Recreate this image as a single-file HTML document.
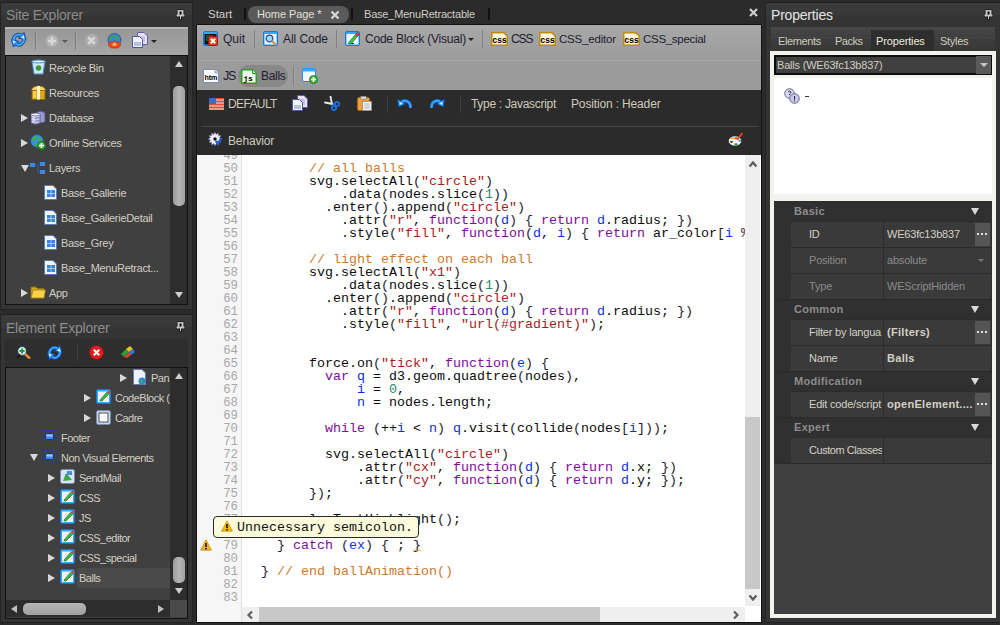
<!DOCTYPE html>
<html><head><meta charset="utf-8">
<style>
*{box-sizing:border-box;}
html,body{margin:0;padding:0;}
body{width:1000px;height:625px;background:#2b2b2b;position:relative;overflow:hidden;font-family:"Liberation Sans",sans-serif;font-size:11px;color:#d6d2c8;}
.a{position:absolute;}
.panel{position:absolute;border:1px solid #232323;background:linear-gradient(#3b3b3b,#393939 11px,#343434 14px,#343434);}
.ptitle{position:absolute;font-size:14px;line-height:16px;color:#8c8c8c;white-space:nowrap;letter-spacing:-0.25px;}
.pin{position:absolute;width:9px;height:10px;}
.tb-light{position:absolute;background:linear-gradient(#b6b6b6,#b6b6b6 1.5px,#979797 2px,#a7a7a7 100%);}
.tree{position:absolute;background:#404040;border:1px solid #111;overflow:hidden;}
.vs{position:absolute;background:#2d2d2d;}
.row{position:absolute;white-space:nowrap;height:20px;line-height:20px;letter-spacing:-0.3px;color:#d2cec4;}
.ico{position:absolute;}
.tri{position:absolute;width:0;height:0;}
.code{position:absolute;font-family:"Liberation Mono",monospace;font-size:13.33px;line-height:13px;white-space:pre;color:#0c0c0c;}
.ln{position:absolute;font-family:"Liberation Mono",monospace;font-size:12.4px;line-height:13px;white-space:pre;color:#a8a8a8;text-align:right;}
.c{color:#cc7a2c}.s{color:#a51c1c}.k{color:#800a9a}.v{color:#1030e0}.n{color:#2a8a70}.p{color:#1c1c30}.b{color:#1c1c30}
.prow{position:absolute;left:790px;width:202px;height:26px;background:#3b3b3b;border-top:1px solid #2c2c2c;}
.plab{position:absolute;left:18px;top:0;line-height:25px;letter-spacing:-0.25px;white-space:nowrap;}
.pval{position:absolute;left:94px;top:0;height:25px;width:108px;border-left:1px solid #2c2c2c;line-height:25px;padding-left:3px;white-space:nowrap;overflow:hidden;letter-spacing:-0.25px;}
.pcat{position:absolute;left:774px;width:218px;height:20px;background:#2e2e2e;}
.pcat b{position:absolute;left:20px;top:0;line-height:20px;color:#8a8a8a;letter-spacing:-0.1px;}
.dots{position:absolute;right:1px;top:1px;width:16px;height:24px;background:#5a5a5a;color:#ddd;font-size:11px;line-height:20px;text-align:center;font-weight:bold;}
.sep{position:absolute;width:1px;}
</style></head>
<body>

<!-- ============ SITE EXPLORER ============ -->
<div class="panel" style="left:0px;top:2px;width:193px;height:308px;"></div>
<div class="ptitle" style="left:6px;top:7px;">Site Explorer</div>
<div class="tb-light" style="left:5px;top:27px;width:183px;height:29px;"></div>
<div class="tree" style="left:5px;top:55px;width:183px;height:250px;"></div>
<div class="vs" style="left:170px;top:56px;width:17px;height:248px;"></div>

<svg class="ico" style="left:11px;top:32px" width="16" height="16" viewBox="0 0 16 16"><g fill="none"><path d="M2.5 9.5 C2 4 6.5 1 10.5 3.5" stroke="#0e4aa8" stroke-width="3.6"/><path d="M13 5.5 C13.5 11 9 14.5 5 12" stroke="#0e4aa8" stroke-width="3.6"/></g><path d="M13 0.5 L7.5 6 L15 8 Z" fill="#2a90f0" stroke="#0e4aa8" stroke-width="1"/><path d="M2.5 15 L8 9.5 L0.5 7.5 Z" fill="#2a90f0" stroke="#0e4aa8" stroke-width="1"/><g fill="none"><path d="M2.5 9.5 C2 4 6.5 1 10.5 3.5" stroke="#40a4ff" stroke-width="2"/><path d="M13 5.5 C13.5 11 9 14.5 5 12" stroke="#40a4ff" stroke-width="2"/></g><path d="M12.5 3 L10 5.8 L13.5 6.8 Z" fill="#dff0ff"/><path d="M2.5 12 L5 9.5 L1.8 8.8 Z" fill="#dff0ff"/></svg>
<div class="sep" style="left:35px;top:32px;height:18px;width:2px;background:#7a7a7a;border-right:1px solid #a8a8a8;"></div>
<svg class="ico" style="left:45px;top:34px" width="14" height="14" viewBox="0 0 14 14"><circle cx="7" cy="7" r="6.5" fill="#b4b4b4" stroke="#a0a0a0"/><path d="M7 3 V11 M3 7 H11" stroke="#d8d8d8" stroke-width="2.5"/></svg>
<div class="tri" style="left:62px;top:40px;border-top:3px solid #5a5a5a;border-left:3px solid transparent;border-right:3px solid transparent;"></div>
<div class="sep" style="left:75px;top:32px;height:18px;width:2px;background:#7a7a7a;border-right:1px solid #a8a8a8;"></div>
<svg class="ico" style="left:84px;top:33px" width="15" height="15" viewBox="0 0 15 15"><circle cx="7.5" cy="7.5" r="7" fill="#acacac" stroke="#a2a2a2"/><path d="M4.2 4.2 L10.8 10.8 M10.8 4.2 L4.2 10.8" stroke="#d6d6d6" stroke-width="2.6"/></svg>
<svg class="ico" style="left:107px;top:33px" width="15" height="16" viewBox="0 0 15 16"><circle cx="7.5" cy="7" r="6.5" fill="#3a8ad8" stroke="#1a4a8a" stroke-width="0.8"/><path d="M2 5 Q4 1.5 7 2 Q6 5 3 7 Z M8 3 Q11 2.5 13 6 L10 7 Q9 5 8 3 Z" fill="#3aa83a"/><path d="M1 12 L4 8 L6 10 L7.5 7 L9 10 L11 8 L14 12 L11 15 H4 Z" fill="#f04a1a" stroke="#b02a0a" stroke-width="0.6"/><path d="M5 11 L7.5 9 L10 11 L9 13 H6 Z" fill="#f8a060"/></svg>
<svg class="ico" style="left:131px;top:32px" width="18" height="17" viewBox="0 0 18 17"><path d="M6.5 0.5 H13 L16.5 4 V12.5 H6.5 Z" fill="#e8e4f8" stroke="#6a5aa8"/><path d="M9 5 H14 M9 7 H14 M9 9 H14" stroke="#9a8ad0" stroke-width="0.8"/><path d="M1.5 4.5 H8.5 L11.5 7.5 V15.5 H1.5 Z" fill="#f2f4fc" stroke="#4a5aa0"/><rect x="3" y="10" width="7" height="4" fill="#b8c0e8"/></svg>
<div class="tri" style="left:151px;top:40px;border-top:3px solid #222;border-left:3px solid transparent;border-right:3px solid transparent;"></div>
<svg class="ico" style="left:176px;top:9px" width="10" height="11" viewBox="0 0 10 11"><path d="M1.5 1 H7.5 V5.5 H8.5 V7.5 H5 V10 H4 V7.5 H0.5 V5.5 H1.5 Z" fill="none" stroke="#151515" stroke-width="1.4" stroke-linejoin="round"/><path d="M1.5 1 H7.5 V5.5 H8.5 V7.5 H5 V10 H4 V7.5 H0.5 V5.5 H1.5 Z" fill="#c2c2c2"/><rect x="3.5" y="2.5" width="2" height="3" fill="#111"/></svg>
<svg class="ico" style="left:31px;top:59px" width="15" height="16" viewBox="0 0 15 16"><path d="M1 2 H14 L12 15 H3 Z" fill="#cfe8f8" stroke="#4a90c8" stroke-width="1"/><ellipse cx="7.5" cy="2.5" rx="6.5" ry="1.5" fill="#e8f6ff" stroke="#4a90c8"/><circle cx="7.5" cy="9" r="2.8" fill="#3a9a3a"/></svg>
<div class="row" style="left:49px;top:58px;">Recycle Bin</div>
<svg class="ico" style="left:31px;top:85px" width="15" height="15" viewBox="0 0 15 15"><rect x="1" y="5" width="13" height="9.5" fill="#e0a818" stroke="#8a6408" stroke-width="0.8"/><path d="M0.5 5.5 Q1 1 7.5 1 Q14 1 14.5 5.5 Z" fill="#f8d858" stroke="#8a6408" stroke-width="0.8"/><rect x="6" y="1" width="3" height="13.5" fill="#fff4c8"/><rect x="2" y="6" width="3" height="7" fill="#f8d050"/></svg>
<div class="row" style="left:49px;top:83px;">Resources</div>
<div class="tri" style="left:21px;top:114px;border-left:7px solid #d8d8d8;border-top:4px solid transparent;border-bottom:4px solid transparent;"></div>
<svg class="ico" style="left:30px;top:110px" width="16" height="15" viewBox="0 0 16 15"><path d="M6 2.5 Q10.5 0 15 2.5 V12 Q10.5 14 6 12 Z" fill="#9a9ad0" stroke="#4a4a80" stroke-width="0.8"/><path d="M1 4.5 Q5.5 2 10 4.5 V13 Q5.5 15.5 1 13 Z" fill="#c8c8f0" stroke="#4a4a80" stroke-width="0.8"/><ellipse cx="5.5" cy="4.5" rx="4.5" ry="1.5" fill="#e8e8ff" stroke="#4a4a80" stroke-width="0.6"/><path d="M1.5 7.5 Q5.5 9 9.5 7.5 M1.5 10.5 Q5.5 12 9.5 10.5" stroke="#6a6aa0" fill="none" stroke-width="0.8"/><rect x="2.5" y="6" width="2" height="6" fill="#f4f4ff" opacity="0.7"/></svg>
<div class="row" style="left:49px;top:108px;">Database</div>
<div class="tri" style="left:21px;top:139px;border-left:7px solid #d8d8d8;border-top:4px solid transparent;border-bottom:4px solid transparent;"></div>
<svg class="ico" style="left:30px;top:134px" width="16" height="16" viewBox="0 0 16 16"><circle cx="7" cy="7" r="6.5" fill="#3a90e0" stroke="#1a4a8a" stroke-width="0.8"/><path d="M2 5 Q4 1.5 7 1.5 Q6.5 5 3.5 8 Z M8 3 Q12 3 12.5 7 L9.5 8 Z M4 10 Q6 9 8 12 L6 13 Z" fill="#40b040"/><circle cx="11.5" cy="11.5" r="4" fill="#30b030" stroke="#1a6a1a" stroke-width="0.8"/><path d="M11.5 9 V14 M9 11.5 H14" stroke="#fff" stroke-width="1.6"/></svg>
<div class="row" style="left:49px;top:133px;">Online Services</div>
<div class="tri" style="left:21px;top:165px;border-top:7px solid #d8d8d8;border-left:4px solid transparent;border-right:4px solid transparent;"></div>
<svg class="ico" style="left:30px;top:162px" width="16" height="13" viewBox="0 0 16 13"><rect x="0" y="1" width="5" height="4" fill="#3a8ae8"/><rect x="10" y="0" width="5" height="4" fill="#3a8ae8"/><rect x="10" y="8" width="5" height="4" fill="#3a8ae8"/><path d="M5 3 H8 V10 H10 M8 2 H10" stroke="#2a5ab0" fill="none"/></svg>
<div class="row" style="left:49px;top:158px;">Layers</div>
<svg class="ico" style="left:44px;top:185px" width="13" height="15" viewBox="0 0 13 15"><path d="M0.5 0.5 H9 L12.5 4 V14.5 H0.5 Z" fill="#f0f4ff" stroke="#5a7ab8"/><rect x="3" y="5" width="8" height="7" fill="#3a80e0"/><path d="M3 8.5 H11 M7 5 V12" stroke="#bcd8ff" stroke-width="0.8"/></svg>
<div class="row" style="left:61px;top:183px;">Base_Gallerie</div>
<svg class="ico" style="left:44px;top:210px" width="13" height="15" viewBox="0 0 13 15"><path d="M0.5 0.5 H9 L12.5 4 V14.5 H0.5 Z" fill="#f0f4ff" stroke="#5a7ab8"/><rect x="3" y="5" width="8" height="7" fill="#3a80e0"/><path d="M3 8.5 H11 M7 5 V12" stroke="#bcd8ff" stroke-width="0.8"/></svg>
<div class="row" style="left:61px;top:208px;">Base_GallerieDetail</div>
<svg class="ico" style="left:44px;top:235px" width="13" height="15" viewBox="0 0 13 15"><path d="M0.5 0.5 H9 L12.5 4 V14.5 H0.5 Z" fill="#f0f4ff" stroke="#5a7ab8"/><rect x="3" y="5" width="8" height="7" fill="#3a80e0"/><path d="M3 8.5 H11 M7 5 V12" stroke="#bcd8ff" stroke-width="0.8"/></svg>
<div class="row" style="left:61px;top:233px;">Base_Grey</div>
<svg class="ico" style="left:44px;top:260px" width="13" height="15" viewBox="0 0 13 15"><path d="M0.5 0.5 H9 L12.5 4 V14.5 H0.5 Z" fill="#f0f4ff" stroke="#5a7ab8"/><rect x="3" y="5" width="8" height="7" fill="#3a80e0"/><path d="M3 8.5 H11 M7 5 V12" stroke="#bcd8ff" stroke-width="0.8"/></svg>
<div class="row" style="left:61px;top:258px;">Base_MenuRetract...</div>
<div class="tri" style="left:21px;top:289px;border-left:7px solid #d8d8d8;border-top:4px solid transparent;border-bottom:4px solid transparent;"></div>
<svg class="ico" style="left:30px;top:284px" width="16" height="15" viewBox="0 0 16 15"><path d="M1 3 H6 L7.5 4.5 H14 V14 H1 Z" fill="#d8a818" stroke="#8a6a10"/><path d="M3 6 H15.5 L14 14 H1 Z" fill="#f6d24a" stroke="#9a7a10" stroke-width="0.8"/></svg>
<div class="row" style="left:49px;top:283px;">App</div>
<div class="tri" style="left:175px;top:61px;border-bottom:6px solid #cfcfcf;border-left:4px solid transparent;border-right:4px solid transparent;"></div>
<div class="a" style="left:173px;top:86px;width:12px;height:120px;border-radius:5px;background:linear-gradient(90deg,#9c9c9c,#b4b4b4 50%,#a0a0a0);"></div>
<div class="tri" style="left:175px;top:292px;border-top:6px solid #cfcfcf;border-left:4px solid transparent;border-right:4px solid transparent;"></div>
<!-- ============ ELEMENT EXPLORER ============ -->
<div class="panel" style="left:0px;top:314px;width:193px;height:309px;"></div>
<div class="ptitle" style="left:6px;top:320px;">Element Explorer</div>
<div class="a" style="left:5px;top:339px;width:183px;height:28px;background:#2e2e2e;"></div>
<div class="tree" style="left:5px;top:367px;width:183px;height:252px;"></div>
<div class="vs" style="left:170px;top:368px;width:17px;height:232px;"></div>

<svg class="ico" style="left:16px;top:345px" width="15" height="14" viewBox="0 0 15 14"><circle cx="6" cy="6" r="4.5" fill="#d8ecff" stroke="#303a48" stroke-width="1.2"/><path d="M6 3.5 V8.5 M3.5 6 H8.5" stroke="#1aa01a" stroke-width="1.8"/><path d="M9 9 L14 13.5" stroke="#e0903a" stroke-width="2.5"/><path d="M1 13 L4 10" stroke="#111" stroke-width="1.5"/></svg>
<svg class="ico" style="left:47px;top:345px" width="16" height="16" viewBox="0 0 16 16"><g fill="none"><path d="M2.5 9.5 C2 4 6.5 1 10.5 3.5" stroke="#0e4aa8" stroke-width="3.6"/><path d="M13 5.5 C13.5 11 9 14.5 5 12" stroke="#0e4aa8" stroke-width="3.6"/></g><path d="M13 0.5 L7.5 6 L15 8 Z" fill="#2a90f0" stroke="#0e4aa8" stroke-width="1"/><path d="M2.5 15 L8 9.5 L0.5 7.5 Z" fill="#2a90f0" stroke="#0e4aa8" stroke-width="1"/><g fill="none"><path d="M2.5 9.5 C2 4 6.5 1 10.5 3.5" stroke="#40a4ff" stroke-width="2"/><path d="M13 5.5 C13.5 11 9 14.5 5 12" stroke="#40a4ff" stroke-width="2"/></g><path d="M12.5 3 L10 5.8 L13.5 6.8 Z" fill="#dff0ff"/><path d="M2.5 12 L5 9.5 L1.8 8.8 Z" fill="#dff0ff"/></svg>
<div class="sep" style="left:77px;top:344px;height:18px;background:#3e3e3e;"></div>
<svg class="ico" style="left:89px;top:345px" width="15" height="15" viewBox="0 0 15 15"><circle cx="7.5" cy="7.5" r="7" fill="#e02020" stroke="#901010"/><path d="M4.8 4.8 L10.2 10.2 M10.2 4.8 L4.8 10.2" stroke="#fff" stroke-width="2"/></svg>
<svg class="ico" style="left:120px;top:345px" width="16" height="14" viewBox="0 0 16 14"><path d="M1 9 L6 4 L9 7 L4 12 Z" fill="#2aa02a"/><path d="M6 4 L10 1 L13 4 L9 7 Z" fill="#e8c020"/><path d="M9 7 L13 4 L15 7 L11 10 Z" fill="#3a70e0"/><path d="M4 12 L9 7 L11 10 L7 13 Z" fill="#d84040"/></svg>
<svg class="ico" style="left:176px;top:321px" width="10" height="11" viewBox="0 0 10 11"><path d="M1.5 1 H7.5 V5.5 H8.5 V7.5 H5 V10 H4 V7.5 H0.5 V5.5 H1.5 Z" fill="none" stroke="#151515" stroke-width="1.4" stroke-linejoin="round"/><path d="M1.5 1 H7.5 V5.5 H8.5 V7.5 H5 V10 H4 V7.5 H0.5 V5.5 H1.5 Z" fill="#c2c2c2"/><rect x="3.5" y="2.5" width="2" height="3" fill="#111"/></svg>
<div class="tri" style="left:120px;top:374px;border-left:7px solid #d8d8d8;border-top:4px solid transparent;border-bottom:4px solid transparent;"></div>
<svg class="ico" style="left:133px;top:369px" width="14" height="16" viewBox="0 0 14 16"><path d="M0.5 0.5 H9 L12.5 4 V15.5 H0.5 Z" fill="#eef2ff" stroke="#6a7ab0"/><circle cx="9" cy="12" r="3.5" fill="#2a8ad0"/><path d="M7 10 L10 12 L8 14" fill="#4ab84a"/></svg>
<div class="row" style="left:151px;top:368px;letter-spacing:-0.5px;">Pan</div>
<div class="tri" style="left:84px;top:394px;border-left:7px solid #d8d8d8;border-top:4px solid transparent;border-bottom:4px solid transparent;"></div>
<svg class="ico" style="left:96px;top:389px" width="15" height="15" viewBox="0 0 15 15"><rect x="0.5" y="0.5" width="14" height="14" rx="1.5" fill="#38a8ff" stroke="#1878d8"/><rect x="2" y="2.5" width="11" height="10.5" fill="#f0f0ff"/><path d="M4 11 L11 3 L13 5 L6 12 L4 12 Z" fill="#3ab83a" stroke="#1a6a1a" stroke-width="0.6"/><path d="M11 3 L13 1 L14.5 2.5 L13 5 Z" fill="#e04040"/></svg>
<div class="row" style="left:115px;top:388px;letter-spacing:-0.5px;">CodeBlock (</div>
<div class="tri" style="left:84px;top:414px;border-left:7px solid #d8d8d8;border-top:4px solid transparent;border-bottom:4px solid transparent;"></div>
<svg class="ico" style="left:96px;top:410px" width="15" height="15" viewBox="0 0 15 15"><rect x="0.5" y="0.5" width="14" height="14" rx="2" fill="#c8d8f0" stroke="#7a8ab0"/><rect x="3" y="3" width="9" height="9" fill="#fafafa" stroke="#333" stroke-width="0.8"/></svg>
<div class="row" style="left:115px;top:408px;letter-spacing:-0.5px;">Cadre</div>
<svg class="ico" style="left:42px;top:430px" width="15" height="14" viewBox="0 0 15 14"><rect x="0.5" y="0.5" width="14" height="13" fill="none" stroke="#1a3ac0" stroke-dasharray="1.2 0.8"/><rect x="3.5" y="3.5" width="8" height="6" rx="1" fill="#3a88f0" stroke="#0a2a8a" stroke-width="0.8"/><rect x="4.5" y="4.5" width="6" height="2" fill="#9ac8ff"/></svg>
<div class="row" style="left:61px;top:428px;letter-spacing:-0.5px;">Footer</div>
<div class="tri" style="left:30px;top:454px;border-top:7px solid #d8d8d8;border-left:4px solid transparent;border-right:4px solid transparent;"></div>
<svg class="ico" style="left:42px;top:450px" width="15" height="14" viewBox="0 0 15 14"><rect x="0.5" y="0.5" width="14" height="13" fill="none" stroke="#1a3ac0" stroke-dasharray="1.2 0.8"/><rect x="3.5" y="3.5" width="8" height="6" rx="1" fill="#3a88f0" stroke="#0a2a8a" stroke-width="0.8"/><rect x="4.5" y="4.5" width="6" height="2" fill="#9ac8ff"/></svg>
<div class="row" style="left:61px;top:448px;letter-spacing:-0.5px;">Non Visual Elements</div>
<div class="a" style="left:77px;top:568px;width:93px;height:20px;background:#4a4a4a;"></div>
<div class="tri" style="left:48px;top:474px;border-left:7px solid #d8d8d8;border-top:4px solid transparent;border-bottom:4px solid transparent;"></div>
<svg class="ico" style="left:60px;top:469px" width="15" height="15" viewBox="0 0 15 15"><rect x="0.5" y="0.5" width="14" height="14" rx="2" fill="#d8e4f4" stroke="#7a8ab0"/><path d="M3 12 L6 4 L12 11 Z" fill="#3aa848"/><rect x="7" y="2" width="5" height="4" fill="#4a90e0"/></svg>
<div class="row" style="left:79px;top:468px;letter-spacing:-0.5px;">SendMail</div>
<div class="tri" style="left:48px;top:494px;border-left:7px solid #d8d8d8;border-top:4px solid transparent;border-bottom:4px solid transparent;"></div>
<svg class="ico" style="left:60px;top:489px" width="15" height="15" viewBox="0 0 15 15"><rect x="0.5" y="0.5" width="14" height="14" rx="1.5" fill="#38a8ff" stroke="#1878d8"/><rect x="2" y="2.5" width="11" height="10.5" fill="#f0f0ff"/><path d="M4 11 L11 3 L13 5 L6 12 L4 12 Z" fill="#3ab83a" stroke="#1a6a1a" stroke-width="0.6"/><path d="M11 3 L13 1 L14.5 2.5 L13 5 Z" fill="#e04040"/></svg>
<div class="row" style="left:79px;top:488px;letter-spacing:-0.5px;">CSS</div>
<div class="tri" style="left:48px;top:514px;border-left:7px solid #d8d8d8;border-top:4px solid transparent;border-bottom:4px solid transparent;"></div>
<svg class="ico" style="left:60px;top:509px" width="15" height="15" viewBox="0 0 15 15"><rect x="0.5" y="0.5" width="14" height="14" rx="1.5" fill="#38a8ff" stroke="#1878d8"/><rect x="2" y="2.5" width="11" height="10.5" fill="#f0f0ff"/><path d="M4 11 L11 3 L13 5 L6 12 L4 12 Z" fill="#3ab83a" stroke="#1a6a1a" stroke-width="0.6"/><path d="M11 3 L13 1 L14.5 2.5 L13 5 Z" fill="#e04040"/></svg>
<div class="row" style="left:79px;top:508px;letter-spacing:-0.5px;">JS</div>
<div class="tri" style="left:48px;top:534px;border-left:7px solid #d8d8d8;border-top:4px solid transparent;border-bottom:4px solid transparent;"></div>
<svg class="ico" style="left:60px;top:529px" width="15" height="15" viewBox="0 0 15 15"><rect x="0.5" y="0.5" width="14" height="14" rx="1.5" fill="#38a8ff" stroke="#1878d8"/><rect x="2" y="2.5" width="11" height="10.5" fill="#f0f0ff"/><path d="M4 11 L11 3 L13 5 L6 12 L4 12 Z" fill="#3ab83a" stroke="#1a6a1a" stroke-width="0.6"/><path d="M11 3 L13 1 L14.5 2.5 L13 5 Z" fill="#e04040"/></svg>
<div class="row" style="left:79px;top:528px;letter-spacing:-0.5px;">CSS_editor</div>
<div class="tri" style="left:48px;top:554px;border-left:7px solid #d8d8d8;border-top:4px solid transparent;border-bottom:4px solid transparent;"></div>
<svg class="ico" style="left:60px;top:549px" width="15" height="15" viewBox="0 0 15 15"><rect x="0.5" y="0.5" width="14" height="14" rx="1.5" fill="#38a8ff" stroke="#1878d8"/><rect x="2" y="2.5" width="11" height="10.5" fill="#f0f0ff"/><path d="M4 11 L11 3 L13 5 L6 12 L4 12 Z" fill="#3ab83a" stroke="#1a6a1a" stroke-width="0.6"/><path d="M11 3 L13 1 L14.5 2.5 L13 5 Z" fill="#e04040"/></svg>
<div class="row" style="left:79px;top:548px;letter-spacing:-0.5px;">CSS_special</div>
<div class="tri" style="left:48px;top:574px;border-left:7px solid #d8d8d8;border-top:4px solid transparent;border-bottom:4px solid transparent;"></div>
<svg class="ico" style="left:60px;top:569px" width="15" height="15" viewBox="0 0 15 15"><rect x="0.5" y="0.5" width="14" height="14" rx="1.5" fill="#38a8ff" stroke="#1878d8"/><rect x="2" y="2.5" width="11" height="10.5" fill="#f0f0ff"/><path d="M4 11 L11 3 L13 5 L6 12 L4 12 Z" fill="#3ab83a" stroke="#1a6a1a" stroke-width="0.6"/><path d="M11 3 L13 1 L14.5 2.5 L13 5 Z" fill="#e04040"/></svg>
<div class="row" style="left:79px;top:568px;letter-spacing:-0.5px;">Balls</div>
<div class="tri" style="left:175px;top:373px;border-bottom:6px solid #cfcfcf;border-left:4px solid transparent;border-right:4px solid transparent;"></div>
<div class="a" style="left:173px;top:557px;width:12px;height:26px;border-radius:5px;background:linear-gradient(90deg,#9c9c9c,#b4b4b4 50%,#a0a0a0);"></div>
<div class="tri" style="left:175px;top:588px;border-top:6px solid #cfcfcf;border-left:4px solid transparent;border-right:4px solid transparent;"></div>
<div class="a" style="left:6px;top:600px;width:164px;height:17px;background:#2d2d2d;"></div>
<div class="a" style="left:170px;top:600px;width:17px;height:17px;background:#4a4a4a;"></div>
<div class="tri" style="left:11px;top:605px;border-right:6px solid #bdbdbd;border-top:4px solid transparent;border-bottom:4px solid transparent;"></div>
<div class="a" style="left:23px;top:603px;width:63px;height:12px;border-radius:5px;background:linear-gradient(#b4b4b4,#a0a0a0);"></div>
<div class="tri" style="left:158px;top:605px;border-left:6px solid #bdbdbd;border-top:4px solid transparent;border-bottom:4px solid transparent;"></div>
<!-- ============ EDITOR ============ -->
<div class="a" style="left:196px;top:24px;width:566px;height:599px;background:#111;"></div>
<div class="a" style="left:197px;top:25px;width:564px;height:65px;background:linear-gradient(#a8a8a8,#9c9c9c 35px,#9a9a9a);"></div>
<div class="a" style="left:197px;top:90px;width:564px;height:65px;background:#2b2b2b;"></div>
<div class="a" style="left:197px;top:155px;width:564px;height:467px;background:#fff;"></div>
<div class="a" style="left:197px;top:155px;width:45px;height:467px;background:#f6f6f6;border-right:1px solid #e0e0e0;"></div>

<div class="a" style="left:208px;top:7px;font-size:11.5px;line-height:14px;color:#d0ccc4;letter-spacing:0px;white-space:nowrap;">Start</div>
<div class="a" style="left:244px;top:8px;width:2px;height:12px;background:#111;"></div>
<div class="a" style="left:248px;top:6px;width:101px;height:17px;border-radius:8px;background:#5a5a5a;"></div>
<div class="a" style="left:257px;top:7px;font-size:11px;line-height:14px;color:#e4e0d8;letter-spacing:-0.1px;white-space:nowrap;">Home Page *</div>
<svg class="ico" style="left:330px;top:10px;" width="10" height="10" viewBox="0 0 10 10"><path d="M1.5 1.5 L8.5 8.5 M8.5 1.5 L1.5 8.5" stroke="#d8d8d8" stroke-width="2.2"/></svg>
<div class="a" style="left:351px;top:8px;width:2px;height:12px;background:#111;"></div>
<div class="a" style="left:364px;top:7px;font-size:11px;line-height:14px;color:#d0ccc4;letter-spacing:-0.2px;white-space:nowrap;">Base_MenuRetractable</div>
<div class="a" style="left:488px;top:8px;width:2px;height:12px;background:#111;"></div>
<svg class="ico" style="left:749px;top:8px;" width="9" height="9" viewBox="0 0 9 9"><path d="M1 1 L8 8 M8 1 L1 8" stroke="#cfcfcf" stroke-width="2.2"/></svg>
<svg class="ico" style="left:203px;top:31px" width="15" height="15" viewBox="0 0 15 15"><rect x="0.5" y="0.5" width="14" height="14" rx="1.5" fill="#38a8ff" stroke="#1878d8" stroke-width="1"/><rect x="1.5" y="3" width="12" height="10.5" fill="#101410"/><path d="M3 5 H10 M3 7 H7 M3 9 H6" stroke="#3ab83a" stroke-width="0.8"/><rect x="5.5" y="5.5" width="9" height="9" rx="1" fill="#e03a18" stroke="#901808" stroke-width="0.8"/><path d="M7.8 7.8 L12.2 12.2 M12.2 7.8 L7.8 12.2" stroke="#fff" stroke-width="2"/></svg>
<div class="a" style="left:223px;top:32px;font-size:12px;line-height:14px;color:#1e1c2e;letter-spacing:0px;white-space:nowrap;">Quit</div>
<div class="sep" style="left:254px;top:30px;height:18px;width:2px;background:#808080;border-right:1px solid #a6a6a6;"></div>
<svg class="ico" style="left:263px;top:31px" width="15" height="15" viewBox="0 0 15 15"><rect x="0.5" y="0.5" width="14" height="14" rx="1.5" fill="#38a8ff" stroke="#1878d8" stroke-width="1"/><rect x="1.5" y="3" width="12" height="10.5" fill="#eef0ff"/><circle cx="6.5" cy="7.5" r="3.3" fill="#a8d8ff" stroke="#3a4a6a" stroke-width="1.2"/><path d="M9 10 L12.5 13.5" stroke="#e89030" stroke-width="2.2"/></svg>
<div class="a" style="left:283px;top:32px;font-size:12px;line-height:14px;color:#1e1c2e;letter-spacing:-0.05px;white-space:nowrap;">All Code</div>
<div class="sep" style="left:336px;top:30px;height:18px;width:2px;background:#808080;border-right:1px solid #a6a6a6;"></div>
<svg class="ico" style="left:345px;top:31px" width="15" height="15" viewBox="0 0 15 15"><rect x="0.5" y="0.5" width="14" height="14" rx="1.5" fill="#38a8ff" stroke="#1878d8" stroke-width="1"/><rect x="1.5" y="3" width="12" height="10.5" fill="#f4f4ff"/><path d="M3.5 12.5 H9" stroke="#1a1a5a" stroke-width="1"/><path d="M4 11 L10.5 3.5 L12.5 5.5 L6 13 L3.8 13 Z" fill="#40c040" stroke="#1a6a1a" stroke-width="0.6"/><path d="M10.5 3.5 L12.5 1 L14.5 3 L12.5 5.5 Z" fill="#e84040" stroke="#902020" stroke-width="0.5"/></svg>
<div class="a" style="left:365px;top:32px;font-size:12px;line-height:14px;color:#1e1c2e;letter-spacing:-0.22px;white-space:nowrap;">Code Block (Visual)</div>
<div class="tri" style="left:468px;top:38px;border-top:3px solid #222;border-left:3px solid transparent;border-right:3px solid transparent;"></div>
<div class="sep" style="left:482px;top:30px;height:18px;width:2px;background:#808080;border-right:1px solid #a6a6a6;"></div>
<svg class="ico" style="left:491px;top:32px" width="17" height="14" viewBox="0 0 17 14"><defs><linearGradient id="cg491" x1="0" y1="0" x2="1" y2="1"><stop offset="0" stop-color="#ffffff"/><stop offset="1" stop-color="#f4e8a0"/></linearGradient></defs><path d="M0.75 0.75 H13 L16.25 4 V13.25 H0.75 Z" fill="url(#cg491)" stroke="#c08a10" stroke-width="1.5"/><text x="8.3" y="11" font-family="Liberation Mono" font-size="8.5" font-weight="bold" text-anchor="middle" fill="#000" letter-spacing="-0.4">css</text></svg>
<div class="a" style="left:511px;top:32px;font-size:12px;line-height:14px;color:#1e1c2e;letter-spacing:-1.1px;white-space:nowrap;">CSS</div>
<svg class="ico" style="left:539px;top:32px" width="17" height="14" viewBox="0 0 17 14"><defs><linearGradient id="cg539" x1="0" y1="0" x2="1" y2="1"><stop offset="0" stop-color="#ffffff"/><stop offset="1" stop-color="#f4e8a0"/></linearGradient></defs><path d="M0.75 0.75 H13 L16.25 4 V13.25 H0.75 Z" fill="url(#cg539)" stroke="#c08a10" stroke-width="1.5"/><text x="8.3" y="11" font-family="Liberation Mono" font-size="8.5" font-weight="bold" text-anchor="middle" fill="#000" letter-spacing="-0.4">css</text></svg>
<div class="a" style="left:559px;top:32px;font-size:11.5px;line-height:14px;color:#1e1c2e;letter-spacing:-0.2px;white-space:nowrap;">CSS_editor</div>
<svg class="ico" style="left:623px;top:32px" width="17" height="14" viewBox="0 0 17 14"><defs><linearGradient id="cg623" x1="0" y1="0" x2="1" y2="1"><stop offset="0" stop-color="#ffffff"/><stop offset="1" stop-color="#f4e8a0"/></linearGradient></defs><path d="M0.75 0.75 H13 L16.25 4 V13.25 H0.75 Z" fill="url(#cg623)" stroke="#c08a10" stroke-width="1.5"/><text x="8.3" y="11" font-family="Liberation Mono" font-size="8.5" font-weight="bold" text-anchor="middle" fill="#000" letter-spacing="-0.4">css</text></svg>
<div class="a" style="left:643px;top:32px;font-size:11.5px;line-height:14px;color:#1e1c2e;letter-spacing:-0.3px;white-space:nowrap;">CSS_special</div>
<div class="a" style="left:201px;top:60px;width:558px;height:1px;background:#858585;border-bottom:1px solid #a6a6a6;"></div>
<svg class="ico" style="left:203px;top:69px" width="16" height="14" viewBox="0 0 16 14"><path d="M0.5 0.5 H12 L15.5 4 V13.5 H0.5 Z" fill="#fdfdff" stroke="#8090b0"/><path d="M12 0.5 V4 H15.5" fill="#d8e0f0" stroke="#8090b0" stroke-width="0.8"/><text x="7.8" y="10.6" font-family="Liberation Sans" font-size="7.2" font-weight="bold" text-anchor="middle" fill="#000" letter-spacing="-0.2">htm</text></svg>
<div class="a" style="left:223px;top:69px;font-size:12.5px;line-height:14px;color:#1e1c2e;letter-spacing:-1.2px;white-space:nowrap;">JS</div>
<div class="a" style="left:238px;top:65px;width:50px;height:22px;border-radius:11px;background:#888;"></div>
<svg class="ico" style="left:241px;top:69px" width="16" height="15" viewBox="0 0 16 15"><path d="M0.75 0.75 H11.5 L15.25 4.5 V14.25 H0.75 Z" fill="#eefaea" stroke="#28a028" stroke-width="1.5"/><path d="M11.5 0.75 V4.5 H15.25" fill="#c8ecc0" stroke="#28a028" stroke-width="1"/><text x="7" y="11.5" font-family="Liberation Mono" font-size="8" font-weight="bold" text-anchor="middle" fill="#000">js</text></svg>
<div class="a" style="left:261px;top:69px;font-size:12px;line-height:14px;color:#1e1c2e;letter-spacing:-0.3px;white-space:nowrap;">Balls</div>
<div class="sep" style="left:293px;top:67px;height:18px;width:2px;background:#808080;border-right:1px solid #a6a6a6;"></div>
<svg class="ico" style="left:302px;top:68px" width="16" height="16" viewBox="0 0 16 16"><rect x="0.5" y="0.5" width="13" height="13" rx="1.5" fill="#f4f8ff" stroke="#2a88e8"/><rect x="0.5" y="0.5" width="13" height="3" fill="#38a8ff"/><circle cx="11.5" cy="11.5" r="4" fill="#30b830" stroke="#1a6a1a" stroke-width="0.7"/><path d="M11.5 9 V14 M9 11.5 H14" stroke="#fff" stroke-width="1.7"/></svg>
<svg class="ico" style="left:209px;top:98px;" width="15" height="12" viewBox="0 0 15 12"><rect x="0" y="0" width="15" height="12" fill="#e84a3a"/><path d="M0 2 H15 M0 5 H15 M0 8 H15 M0 11 H15" stroke="#f8e0d8" stroke-width="1"/><rect x="0" y="0" width="7" height="6" fill="#3a6ad0"/></svg>
<div class="a" style="left:228px;top:97px;font-size:12px;line-height:14px;color:#cdc9bd;letter-spacing:-0.62px;white-space:nowrap;">DEFAULT</div>
<svg class="ico" style="left:291px;top:95px" width="18" height="17" viewBox="0 0 18 17"><path d="M6.5 0.5 H13 L16.5 4 V12.5 H6.5 Z" fill="#e8e4f8" stroke="#6a5aa8"/><path d="M9 5 H14 M9 7 H14 M9 9 H14" stroke="#9a8ad0" stroke-width="0.8"/><path d="M1.5 4.5 H8.5 L11.5 7.5 V15.5 H1.5 Z" fill="#f2f4fc" stroke="#4a5aa0"/><rect x="3" y="10" width="7" height="4" fill="#b8c0e8"/></svg>
<svg class="ico" style="left:324px;top:96px" width="16" height="15" viewBox="0 0 16 15"><path d="M6.5 0.5 L8 8 M1 6.5 L8.5 8" stroke="#e8e8e8" stroke-width="1.8" stroke-linecap="round"/><circle cx="13" cy="8" r="2.2" fill="none" stroke="#1a70e0" stroke-width="1.8"/><circle cx="10" cy="12" r="2.2" fill="none" stroke="#1a70e0" stroke-width="1.8"/><path d="M8.5 8.5 L11 8 M8.5 9 L9.5 10.5" stroke="#1a70e0" stroke-width="1.5"/></svg>
<svg class="ico" style="left:357px;top:96px" width="15" height="15" viewBox="0 0 15 15"><rect x="0.5" y="1.5" width="12" height="13" rx="1.5" fill="#f0a038" stroke="#a86010" stroke-width="0.8"/><rect x="3.5" y="0.3" width="6" height="3" rx="0.8" fill="#d8d8d8" stroke="#777" stroke-width="0.6"/><rect x="5.5" y="5.5" width="9" height="9" fill="#f4f4f4" stroke="#8a8a8a" stroke-width="0.8"/><path d="M7 8 H13 M7 10 H13 M7 12 H13" stroke="#aaa" stroke-width="0.8"/></svg>
<div class="sep" style="left:387px;top:96px;height:17px;background:#3e3e3e;"></div>
<svg class="ico" style="left:397px;top:97px" width="15" height="13" viewBox="0 0 15 13"><path d="M13.5 11 C14 4 7 2 4.5 5.5" fill="none" stroke="#0a4a9a" stroke-width="4"/><path d="M0.5 2 L1.5 10 L8.5 7 Z" fill="#2a90f0" stroke="#0a4a9a" stroke-width="0.9"/><path d="M13.5 11 C14 4 7 2 4.5 5.5" fill="none" stroke="#3aa0ff" stroke-width="2.4"/><path d="M2.2 4.5 L2.8 8 L5.8 6.8 Z" fill="#cfe8ff"/></svg>
<svg class="ico" style="left:430px;top:97px;transform:scaleX(-1)" width="15" height="13" viewBox="0 0 15 13"><path d="M13.5 11 C14 4 7 2 4.5 5.5" fill="none" stroke="#0a4a9a" stroke-width="4"/><path d="M0.5 2 L1.5 10 L8.5 7 Z" fill="#2a90f0" stroke="#0a4a9a" stroke-width="0.9"/><path d="M13.5 11 C14 4 7 2 4.5 5.5" fill="none" stroke="#3aa0ff" stroke-width="2.4"/><path d="M2.2 4.5 L2.8 8 L5.8 6.8 Z" fill="#cfe8ff"/></svg>
<div class="sep" style="left:460px;top:96px;height:17px;background:#3e3e3e;"></div>
<div class="a" style="left:471px;top:97px;font-size:12px;line-height:14px;color:#cdc9bd;letter-spacing:-0.3px;white-space:nowrap;">Type : Javascript</div>
<div class="a" style="left:571px;top:97px;font-size:12px;line-height:14px;color:#cdc9bd;letter-spacing:-0.15px;white-space:nowrap;">Position : Header</div>
<div class="a" style="left:201px;top:126px;width:558px;height:1px;background:#464646;"></div>
<svg class="ico" style="left:208px;top:132px" width="16" height="16" viewBox="0 0 16 16"><polygon points="13.80,7.00 11.64,8.24 12.89,10.40 10.39,10.39 10.40,12.89 8.24,11.64 7.00,13.80 5.76,11.64 3.60,12.89 3.61,10.39 1.11,10.40 2.36,8.24 0.20,7.00 2.36,5.76 1.11,3.60 3.61,3.61 3.60,1.11 5.76,2.36 7.00,0.20 8.24,2.36 10.40,1.11 10.39,3.61 12.89,3.60 11.64,5.76" fill="#eeeefc" stroke="#6a6a9a" stroke-width="0.6"/><circle cx="7" cy="7" r="1.7" fill="#111"/><path d="M7.5 9.5 L9.5 13.5 L14.5 6.5 L12.5 6 L9.8 10 L9 8.8 Z" fill="#2a6ae0" stroke="#0a3a9a" stroke-width="0.6"/></svg>
<div class="a" style="left:228px;top:134px;font-size:12px;line-height:14px;color:#cdc9bd;letter-spacing:-0.15px;white-space:nowrap;">Behavior</div>
<svg class="ico" style="left:728px;top:132px" width="16" height="16" viewBox="0 0 16 16"><ellipse cx="7" cy="9" rx="6.6" ry="5.1" fill="#f4f4f8" stroke="#202020" stroke-width="0.6"/><ellipse cx="4.3" cy="6.3" rx="1.8" ry="1" fill="#e8b010"/><ellipse cx="8" cy="6.2" rx="1.6" ry="1" fill="#e03a10"/><ellipse cx="11.8" cy="8.8" rx="1.2" ry="0.9" fill="#2a70d8"/><ellipse cx="8" cy="12.2" rx="1.7" ry="1" fill="#1a9a2a"/><ellipse cx="3.5" cy="9.8" rx="1.4" ry="0.9" fill="#151515"/><path d="M13.8 0.5 L15 1.8 L10 8 L8.8 7.2 Z" fill="#f05a20" stroke="#a83010" stroke-width="0.5"/></svg>
<!-- ============ CODE ============ -->
<div class="a" style="left:197px;top:155px;width:548px;height:452px;overflow:hidden;">
<div class="ln" style="left:0;top:-5px;width:41px;">49
50
51
52
53
54
55
56
57
58
59
60
61
62
63
64
65
66
67
68
69
70
71
72
73
74
75
76
77
78
79
80
81
82
83</div>
<div class="code" style="left:48px;top:-6px;">
        <span class="c">// all balls</span>
        svg.selectAll<span class="p">(</span><span class="s">"circle"</span><span class="p">)</span>
            .data<span class="p">(</span>nodes.slice<span class="p">(</span><span class="n">1</span><span class="p">))</span>
          .enter<span class="p">()</span>.append<span class="p">(</span><span class="s">"circle"</span><span class="p">)</span>
            .attr<span class="p">(</span><span class="s">"r"</span>, <span class="k">function</span><span class="p">(</span><span class="v">d</span><span class="p">)</span> <span class="b">{</span> <span class="k">return</span> <span class="v">d</span>.radius; <span class="b">}</span><span class="p">)</span>
            .style<span class="p">(</span><span class="s">"fill"</span>, <span class="k">function</span><span class="p">(</span><span class="v">d</span>, <span class="v">i</span><span class="p">)</span> <span class="b">{</span> <span class="k">return</span> ar_color<span class="b">[</span><span class="v">i</span> <span class="b">%</span> ar_color.length<span class="b">]</span>; <span class="b">}</span><span class="p">)</span>

        <span class="c">// light effect on each ball</span>
        svg.selectAll<span class="p">(</span><span class="s">"x1"</span><span class="p">)</span>
            .data<span class="p">(</span>nodes.slice<span class="p">(</span><span class="n">1</span><span class="p">))</span>
          .enter<span class="p">()</span>.append<span class="p">(</span><span class="s">"circle"</span><span class="p">)</span>
            .attr<span class="p">(</span><span class="s">"r"</span>, <span class="k">function</span><span class="p">(</span><span class="v">d</span><span class="p">)</span> <span class="b">{</span> <span class="k">return</span> <span class="v">d</span>.radius; <span class="b">}</span><span class="p">)</span>
            .style<span class="p">(</span><span class="s">"fill"</span>, <span class="s">"url(#gradient)"</span><span class="p">)</span>;


        force.on<span class="p">(</span><span class="s">"tick"</span>, <span class="k">function</span><span class="p">(</span><span class="v">e</span><span class="p">)</span> <span class="b">{</span>
          <span class="k">var</span> <span class="v">q</span> = d3.geom.quadtree<span class="p">(</span>nodes<span class="p">)</span>,
              <span class="v">i</span> = <span class="n">0</span>,
              <span class="v">n</span> = nodes.length;

          <span class="k">while</span> <span class="p">(</span>++<span class="v">i</span> &lt; <span class="v">n</span><span class="p">)</span> <span class="v">q</span>.visit<span class="p">(</span>collide<span class="p">(</span>nodes<span class="b">[</span><span class="v">i</span><span class="b">]</span><span class="p">))</span>;

          svg.selectAll<span class="p">(</span><span class="s">"circle"</span><span class="p">)</span>
              .attr<span class="p">(</span><span class="s">"cx"</span>, <span class="k">function</span><span class="p">(</span><span class="v">d</span><span class="p">)</span> <span class="b">{</span> <span class="k">return</span> <span class="v">d</span>.x; <span class="b">}</span><span class="p">)</span>
              .attr<span class="p">(</span><span class="s">"cy"</span>, <span class="k">function</span><span class="p">(</span><span class="v">d</span><span class="p">)</span> <span class="b">{</span> <span class="k">return</span> <span class="v">d</span>.y; <span class="b">}</span><span class="p">)</span>;
        <span class="b">}</span><span class="p">)</span>;

        l. TextHighlight<span class="p">()</span>;

    <span class="b">}</span> <span class="k">catch</span> <span class="p">(</span><span class="v">ex</span><span class="p">)</span> <span class="b">{</span> ; <span class="b">}</span>

  <span class="b">}</span> <span class="c">// end ballAnimation()</span>

</div>
</div>
<!-- scrollbars -->
<div class="a" style="left:745px;top:155px;width:15px;height:451px;background:#efefef;"></div>
<svg class="ico" style="left:748px;top:159px" width="10" height="10" viewBox="0 0 10 10"><path d="M1.6 7.5 L5 3.5 L8.4 7.5" stroke="#5e5e5e" stroke-width="2.3" fill="none"/></svg>
<div class="a" style="left:745px;top:417px;width:15px;height:172px;background:#c8c8c8;"></div>
<svg class="ico" style="left:748px;top:593px" width="10" height="10" viewBox="0 0 10 10"><path d="M1.6 2.5 L5 6.5 L8.4 2.5" stroke="#5e5e5e" stroke-width="2.3" fill="none"/></svg>
<div class="a" style="left:242px;top:607px;width:503px;height:15px;background:#efefef;"></div>
<div class="a" style="left:259px;top:607px;width:341px;height:15px;background:#c8c8c8;"></div>
<svg class="ico" style="left:246px;top:610px" width="8" height="10" viewBox="0 0 8 10"><path d="M6 1.5 L2.5 5 L6 8.5" stroke="#606060" stroke-width="2.2" fill="none"/></svg>
<svg class="ico" style="left:732px;top:610px" width="8" height="10" viewBox="0 0 8 10"><path d="M2 1.5 L5.5 5 L2 8.5" stroke="#606060" stroke-width="2.2" fill="none"/></svg>
<!-- tooltip -->
<div class="a" style="left:213px;top:516px;width:206px;height:22px;background:#fcfbdc;border:1px solid #2a2a2a;border-radius:4px;"></div>
<svg class="ico" style="left:221px;top:520px" width="12" height="12" viewBox="0 0 12 12"><path d="M6 0.8 L11.5 11.2 H0.5 Z" fill="#f5b800" stroke="#c08000" stroke-width="0.6"/><path d="M6 4 V8" stroke="#111" stroke-width="1.6"/><rect x="5.2" y="9" width="1.6" height="1.5" fill="#111"/></svg>
<div class="code" style="left:237px;top:521px;color:#111;">Unnecessary semicolon.</div>
<svg class="ico" style="left:200px;top:539px" width="12" height="12" viewBox="0 0 12 12"><path d="M6 0.8 L11.5 11.2 H0.5 Z" fill="#f5b800" stroke="#c08000" stroke-width="0.6"/><path d="M6 4 V8" stroke="#111" stroke-width="1.6"/><rect x="5.2" y="9" width="1.6" height="1.5" fill="#111"/></svg>
<svg class="ico" style="left:413px;top:549px" width="8" height="4" viewBox="0 0 8 4"><path d="M0 2 L2 0.8 L4 2.5 L6 0.8 L8 2" stroke="#e8a020" stroke-width="1" fill="none"/></svg>

<!-- ============ PROPERTIES ============ -->
<div class="panel" style="left:765px;top:2px;width:240px;height:621px;"></div>
<div class="ptitle" style="left:771px;top:7px;color:#e4e4e4;letter-spacing:-0.2px;">Properties</div>
<div class="a" style="left:770px;top:51px;width:226px;height:567px;background:#f3f2ec;"></div>
<div class="a" style="left:774px;top:78px;width:218px;height:116px;background:#fff;"></div>
<div class="a" style="left:774px;top:201px;width:218px;height:413px;background:#404040;"></div>

<div class="a" style="left:771px;top:27px;width:224px;height:24px;background:linear-gradient(#484848,#3e3e3e 45%,#373737);"></div>
<div class="a" style="left:771px;top:37px;width:224px;height:1px;background:repeating-linear-gradient(90deg,#555 0 1px,transparent 1px 3px);"></div>
<div class="a" style="left:871px;top:30px;width:63px;height:21px;background:#2e2e2e;"></div>
<div class="a" style="left:778px;top:34px;font-size:11px;line-height:14px;color:#d0ccbc;letter-spacing:-0.37px;white-space:nowrap;">Elements</div>
<div class="a" style="left:835px;top:34px;font-size:11px;line-height:14px;color:#d0ccbc;letter-spacing:-0.5px;white-space:nowrap;">Packs</div>
<div class="a" style="left:876px;top:34px;font-size:11px;line-height:14px;color:#ece8dc;letter-spacing:-0.14px;white-space:nowrap;">Properties</div>
<div class="a" style="left:940px;top:34px;font-size:11px;line-height:14px;color:#d0ccbc;letter-spacing:-0.27px;white-space:nowrap;">Styles</div>
<svg class="ico" style="left:984px;top:9px" width="10" height="11" viewBox="0 0 10 11"><path d="M1.5 1 H7.5 V5.5 H8.5 V7.5 H5 V10 H4 V7.5 H0.5 V5.5 H1.5 Z" fill="none" stroke="#151515" stroke-width="1.4" stroke-linejoin="round"/><path d="M1.5 1 H7.5 V5.5 H8.5 V7.5 H5 V10 H4 V7.5 H0.5 V5.5 H1.5 Z" fill="#c2c2c2"/><rect x="3.5" y="2.5" width="2" height="3" fill="#111"/></svg>
<div class="a" style="left:774px;top:55px;width:218px;height:20px;background:#404040;border:2px solid #0e0e0e;"></div>
<div class="a" style="left:976px;top:56px;width:15px;height:18px;background:#5a5a5a;"></div>
<div class="tri" style="left:980px;top:63px;border-top:4px solid #c8c8c8;border-left:4px solid transparent;border-right:4px solid transparent;"></div>
<div class="a" style="left:777px;top:58px;font-size:11px;line-height:14px;color:#d0ccc0;letter-spacing:-0.2px;white-space:nowrap;">Balls (WE63fc13b837)</div>
<svg class="ico" style="left:784px;top:88px;" width="16" height="16" viewBox="0 0 16 16"><circle cx="5.5" cy="5.5" r="4.8" fill="#d8d8f0" stroke="#6a6a90"/><circle cx="10.5" cy="10.5" r="4.8" fill="#c8c8e8" stroke="#6a6a90"/><path d="M4 4 Q5.5 2 7 4 Q7 5 5.5 6 V7" stroke="#222" fill="none" stroke-width="0.9"/><path d="M10.5 8 V11.5 M10.5 12.5 V13.5" stroke="#222" stroke-width="1"/></svg>
<div class="a" style="left:805px;top:96px;width:4px;height:1px;background:#333;"></div>
<div class="a" style="left:774px;top:201px;width:218px;height:262px;background:#303030;"></div>
<div class="a" style="left:774px;top:201px;width:218px;height:1px;background:#2a2a2a;"></div><div class="a" style="left:794px;top:204px;font-size:11px;line-height:14px;font-weight:bold;color:#8c8c8c;letter-spacing:0.3px;">Basic</div><div class="tri" style="left:971px;top:208px;border-top:7px solid #d8d8d8;border-left:4px solid transparent;border-right:4px solid transparent;"></div>
<div class="a" style="left:791px;top:221px;width:200px;height:26px;background:#3a3a3a;border-top:1px solid #2c2c2c;"></div><div class="a" style="left:883px;top:221px;width:1px;height:26px;background:#2c2c2c;"></div><div class="a" style="left:809px;top:227px;width:73px;overflow:hidden;font-size:11px;line-height:14px;color:#d4d0c6;letter-spacing:-0.2px;white-space:nowrap;">ID</div><div class="a" style="left:887px;top:227px;width:88px;overflow:hidden;font-size:11px;line-height:14px;font-weight:normal;color:#d4d0c6;letter-spacing:-0.2px;white-space:nowrap;">WE63fc13b837</div><div class="a" style="left:975px;top:223px;width:15px;height:23px;background:#555;"></div><div class="a" style="left:977px;top:233px;width:2px;height:2px;background:#e0e0e0;box-shadow:4px 0 #e0e0e0,8px 0 #e0e0e0;"></div>
<div class="a" style="left:791px;top:247px;width:200px;height:26px;background:#3a3a3a;border-top:1px solid #2c2c2c;"></div><div class="a" style="left:883px;top:247px;width:1px;height:26px;background:#2c2c2c;"></div><div class="a" style="left:809px;top:253px;width:73px;overflow:hidden;font-size:11px;line-height:14px;color:#8a8a8a;letter-spacing:-0.2px;white-space:nowrap;">Position</div><div class="a" style="left:887px;top:253px;width:88px;overflow:hidden;font-size:11px;line-height:14px;font-weight:normal;color:#8a8a8a;letter-spacing:-0.2px;white-space:nowrap;">absolute</div><div class="tri" style="left:978px;top:259px;border-top:3px solid #777;border-left:3px solid transparent;border-right:3px solid transparent;"></div>
<div class="a" style="left:791px;top:273px;width:200px;height:26px;background:#3a3a3a;border-top:1px solid #2c2c2c;"></div><div class="a" style="left:883px;top:273px;width:1px;height:26px;background:#2c2c2c;"></div><div class="a" style="left:809px;top:279px;width:73px;overflow:hidden;font-size:11px;line-height:14px;color:#8a8a8a;letter-spacing:-0.2px;white-space:nowrap;">Type</div><div class="a" style="left:887px;top:279px;width:88px;overflow:hidden;font-size:11px;line-height:14px;font-weight:normal;color:#8a8a8a;letter-spacing:-0.2px;white-space:nowrap;">WEScriptHidden</div>
<div class="a" style="left:774px;top:299px;width:218px;height:1px;background:#2a2a2a;"></div><div class="a" style="left:794px;top:302px;font-size:11px;line-height:14px;font-weight:bold;color:#8c8c8c;letter-spacing:0.3px;">Common</div><div class="tri" style="left:971px;top:306px;border-top:7px solid #d8d8d8;border-left:4px solid transparent;border-right:4px solid transparent;"></div>
<div class="a" style="left:791px;top:319px;width:200px;height:26px;background:#3a3a3a;border-top:1px solid #2c2c2c;"></div><div class="a" style="left:883px;top:319px;width:1px;height:26px;background:#2c2c2c;"></div><div class="a" style="left:809px;top:325px;width:73px;overflow:hidden;font-size:11px;line-height:14px;color:#d4d0c6;letter-spacing:-0.2px;white-space:nowrap;">Filter by langua</div><div class="a" style="left:887px;top:325px;width:88px;overflow:hidden;font-size:11px;line-height:14px;font-weight:bold;color:#d4d0c6;letter-spacing:0.3px;white-space:nowrap;">(Filters)</div><div class="a" style="left:975px;top:321px;width:15px;height:23px;background:#555;"></div><div class="a" style="left:977px;top:331px;width:2px;height:2px;background:#e0e0e0;box-shadow:4px 0 #e0e0e0,8px 0 #e0e0e0;"></div>
<div class="a" style="left:791px;top:345px;width:200px;height:26px;background:#3a3a3a;border-top:1px solid #2c2c2c;"></div><div class="a" style="left:883px;top:345px;width:1px;height:26px;background:#2c2c2c;"></div><div class="a" style="left:809px;top:351px;width:73px;overflow:hidden;font-size:11px;line-height:14px;color:#d4d0c6;letter-spacing:-0.2px;white-space:nowrap;">Name</div><div class="a" style="left:887px;top:351px;width:88px;overflow:hidden;font-size:11px;line-height:14px;font-weight:bold;color:#d4d0c6;letter-spacing:0.3px;white-space:nowrap;">Balls</div>
<div class="a" style="left:774px;top:371px;width:218px;height:1px;background:#2a2a2a;"></div><div class="a" style="left:794px;top:374px;font-size:11px;line-height:14px;font-weight:bold;color:#8c8c8c;letter-spacing:0.3px;">Modification</div><div class="tri" style="left:971px;top:378px;border-top:7px solid #d8d8d8;border-left:4px solid transparent;border-right:4px solid transparent;"></div>
<div class="a" style="left:791px;top:391px;width:200px;height:26px;background:#3a3a3a;border-top:1px solid #2c2c2c;"></div><div class="a" style="left:883px;top:391px;width:1px;height:26px;background:#2c2c2c;"></div><div class="a" style="left:809px;top:397px;width:73px;overflow:hidden;font-size:11px;line-height:14px;color:#d4d0c6;letter-spacing:-0.2px;white-space:nowrap;">Edit code/script</div><div class="a" style="left:887px;top:397px;width:88px;overflow:hidden;font-size:11px;line-height:14px;font-weight:bold;color:#d4d0c6;letter-spacing:0.3px;white-space:nowrap;">openElement....</div><div class="a" style="left:975px;top:393px;width:15px;height:23px;background:#555;"></div><div class="a" style="left:977px;top:403px;width:2px;height:2px;background:#e0e0e0;box-shadow:4px 0 #e0e0e0,8px 0 #e0e0e0;"></div>
<div class="a" style="left:774px;top:417px;width:218px;height:1px;background:#2a2a2a;"></div><div class="a" style="left:794px;top:420px;font-size:11px;line-height:14px;font-weight:bold;color:#8c8c8c;letter-spacing:0.3px;">Expert</div><div class="tri" style="left:971px;top:424px;border-top:7px solid #d8d8d8;border-left:4px solid transparent;border-right:4px solid transparent;"></div>
<div class="a" style="left:791px;top:437px;width:200px;height:26px;background:#3a3a3a;border-top:1px solid #2c2c2c;"></div><div class="a" style="left:883px;top:437px;width:1px;height:26px;background:#2c2c2c;"></div><div class="a" style="left:809px;top:443px;width:73px;overflow:hidden;font-size:11px;line-height:14px;color:#d4d0c6;letter-spacing:-0.45px;white-space:nowrap;">Custom Classes</div>
<div class="a" style="left:774px;top:463px;width:218px;height:1px;background:#2c2c2c;"></div>
</body></html>
